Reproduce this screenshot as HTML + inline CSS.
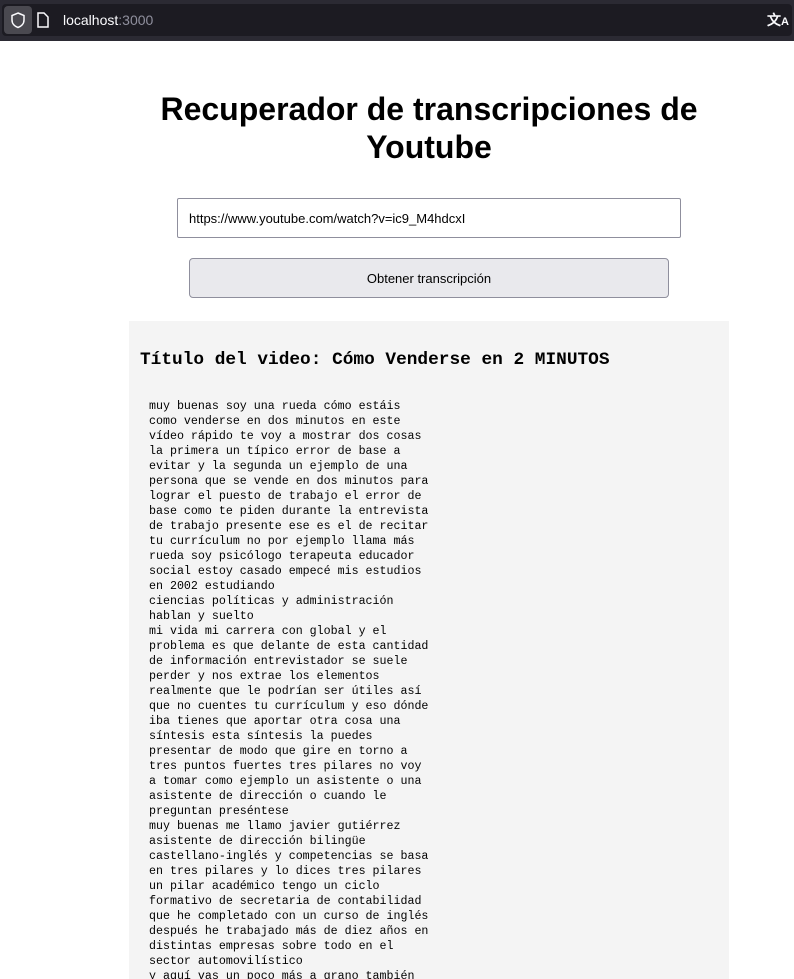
<!DOCTYPE html>
<html style="overflow:hidden;height:979px"><head><meta charset="utf-8"><style>
*{box-sizing:border-box;margin:0;padding:0}
body{width:794px;height:979px;overflow:hidden;background:#fff;position:relative;font-family:"Liberation Sans",sans-serif}
.bar{position:absolute;left:0;top:0;width:794px;height:41px;background:#2b2a33}
.field{position:absolute;left:2px;top:4px;width:790px;height:32px;background:#1c1b22;border-radius:4px}
.shield{position:absolute;left:4px;top:6px;width:28px;height:28px;background:#4a4950;border-radius:4px}
.url{position:absolute;left:63px;top:12px;font-size:14px;color:#fbfbfe}
.url span{color:#8f8f9d}
h1{position:absolute;left:129px;width:600px;top:90px;text-align:center;font-size:32px;line-height:38px;font-weight:bold;color:#000}
.inp{position:absolute;left:177px;top:198px;width:504px;height:40px;border:1px solid #8f8f9d;border-radius:2px;font-size:13px;padding:12px 0 0 11px;color:#000}
.btn{position:absolute;left:189px;top:258px;width:480px;height:40px;background:#e9e9ed;border:1px solid #8f8f9d;border-radius:4px;font-size:13px;text-align:center;line-height:40px;color:#000}
.box{position:absolute;left:129px;top:321px;width:600px;height:658px;background:#f4f4f4}
h2{position:absolute;left:140px;top:350px;font-family:"Liberation Mono",monospace;font-size:17.8px;font-weight:bold;color:#000}
pre{position:absolute;left:149px;top:399px;font-family:"Liberation Mono",monospace;font-size:11.65px;line-height:15px;color:#000}
</style></head><body>
<div class="bar"><div class="field"></div><div class="shield">
<svg width="28" height="28" viewBox="0 0 28 28"><path d="M14 7 L20 9.5 V14 C20 18 17 20.5 14 21.5 C11 20.5 8 18 8 14 V9.5 Z" fill="none" stroke="#fbfbfe" stroke-width="1.5"/></svg></div>
<svg style="position:absolute;left:37px;top:12px" width="12" height="16" viewBox="0 0 12 16"><path d="M1 1 H7 L11 5 V15 H1 Z" fill="none" stroke="#fbfbfe" stroke-width="1.5"/></svg>
<div class="url">localhost<span>:3000</span></div>
<div style="position:absolute;left:767px;top:10px;color:#fbfbfe;font-size:14px;font-weight:bold">文<span style="font-size:11px">A</span></div>
</div>
<h1>Recuperador de transcripciones de Youtube</h1>
<div class="inp">https://www.youtube.com/watch?v=ic9_M4hdcxI</div>
<div class="btn">Obtener transcripción</div>
<div class="box"></div>
<h2>Título del video: Cómo Venderse en 2 MINUTOS</h2>
<pre>muy buenas soy una rueda cómo estáis
como venderse en dos minutos en este
vídeo rápido te voy a mostrar dos cosas
la primera un típico error de base a
evitar y la segunda un ejemplo de una
persona que se vende en dos minutos para
lograr el puesto de trabajo el error de
base como te piden durante la entrevista
de trabajo presente ese es el de recitar
tu currículum no por ejemplo llama más
rueda soy psicólogo terapeuta educador
social estoy casado empecé mis estudios
en 2002 estudiando
ciencias políticas y administración
hablan y suelto
mi vida mi carrera con global y el
problema es que delante de esta cantidad
de información entrevistador se suele
perder y nos extrae los elementos
realmente que le podrían ser útiles así
que no cuentes tu currículum y eso dónde
iba tienes que aportar otra cosa una
síntesis esta síntesis la puedes
presentar de modo que gire en torno a
tres puntos fuertes tres pilares no voy
a tomar como ejemplo un asistente o una
asistente de dirección o cuando le
preguntan preséntese
muy buenas me llamo javier gutiérrez
asistente de dirección bilingüe
castellano-inglés y competencias se basa
en tres pilares y lo dices tres pilares
un pilar académico tengo un ciclo
formativo de secretaria de contabilidad
que he completado con un curso de inglés
después he trabajado más de diez años en
distintas empresas sobre todo en el
sector automovilístico
y aquí vas un poco más a grano también
</pre>
</body></html>
